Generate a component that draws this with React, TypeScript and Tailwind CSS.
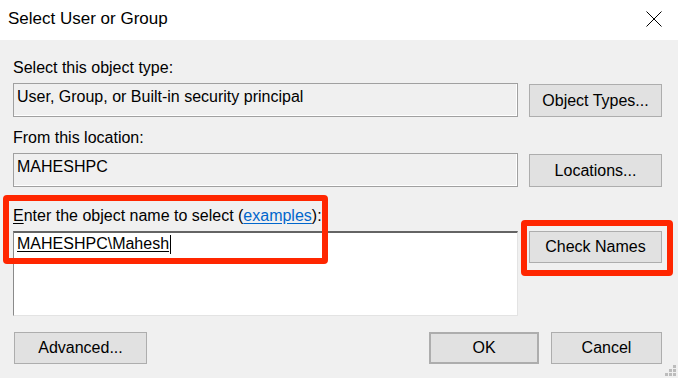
const font = { fontFamily: '"Liberation Sans", Arial, sans-serif' };

const Btn = ({ label, className = "" }: { label: string; className?: string }) => (
  <div
    className={`flex items-center justify-center bg-[#e1e1e1] border border-[#adadad] text-[16px] leading-[18px] text-black ${className}`}
  >
    {label}
  </div>
);

const ReadOnlyBox = ({ text, className = "" }: { text: string; className?: string }) => (
  <div
    className={`w-[505px] h-[34px] bg-[#f0f0f0] border border-[#a0a0a0] shadow-[inset_-1px_-1px_0_#ffffff] pl-[3px] pt-[4px] text-[16px] leading-[18px] text-black ${className}`}
  >
    {text}
  </div>
);

export default function App() {
  return (
    <div style={font} className="relative w-[678px] h-[378px] bg-[#f0f0f0] overflow-hidden select-none">
      {/* title bar */}
      <div className="h-[40px] bg-white flex items-center justify-between pl-[8px] pr-[16px]">
        <span className="text-[17px] leading-[20px] text-black mt-[-2px]">Select User or Group</span>
        <svg width="16" height="16" viewBox="0 0 16 16" className="mt-[-3px]">
          <path d="M0.5 0.5 L15.5 15.5 M15.5 0.5 L0.5 15.5" stroke="#000" strokeWidth="1" fill="none" />
        </svg>
      </div>

      <div className="pl-[13px] pr-[16px] flex flex-col">
        <div className="mt-[19px] text-[16px] leading-[18px] text-black">Select this object type:</div>
        <div className="mt-[6px] flex gap-[11px]">
          <ReadOnlyBox text="User, Group, or Built-in security principal" className="text-[15.5px]" />
          <Btn label="Object Types..." className="w-[133px] h-[33px] mt-[1px]" />
        </div>

        <div className="mt-[12px] text-[16px] leading-[18px] text-black">From this location:</div>
        <div className="mt-[6px] flex gap-[11px]">
          <ReadOnlyBox text="MAHESHPC" />
          <Btn label="Locations..." className="w-[133px] h-[33px] mt-[1px]" />
        </div>

        <div className="mt-[20px] text-[16px] leading-[18px] text-black">
          <span className="underline underline-offset-2">E</span>nter the object name to select (
          <span className="text-[#0066cc] underline underline-offset-2">examples</span>):
        </div>
        <div className="mt-[6px] flex gap-[11px]">
          <div className="w-[505px] h-[85px] bg-white border-t-2 border-l border-t-[#646464] border-l-[#8a8a8a] border-r border-b border-r-[#e3e3e3] border-b-[#e3e3e3] pl-[3px] pt-[2px] text-[16px] leading-[18px] text-black flex items-start">
            <span className="underline underline-offset-2">MAHESHPC\Mahesh</span>
            <span className="ml-[1px] w-[1px] h-[19px] bg-black" />
          </div>
          <Btn label="Check Names" className="w-[133px] h-[32px]" />
        </div>

        <div className="mt-[16px] flex items-start">
          <Btn label="Advanced..." className="w-[133px] h-[32px] ml-[1px]" />
          <div className="flex-1" />
          <Btn label="OK" className="w-[110px] h-[32px] border-2 border-[#0078d7]" />
          <Btn label="Cancel" className="w-[111px] h-[32px] ml-[12px]" />
        </div>
      </div>

      {/* red annotation boxes */}
      <div className="absolute left-[3px] top-[195px] w-[325px] h-[69px] border-[6px] border-[#ff2600] rounded-[4px]" />
      <div className="absolute left-[521px] top-[220px] w-[152px] h-[56px] border-[6px] border-[#ff2600] rounded-[4px]" />

      {/* resize grip */}
      <div className="absolute left-[673px] top-[365px] w-[3px] h-[3px] bg-[#bcbcbc]" />
      <div className="absolute left-[669px] top-[369px] w-[3px] h-[3px] bg-[#bcbcbc]" />
      <div className="absolute left-[673px] top-[369px] w-[3px] h-[3px] bg-[#bcbcbc]" />
      <div className="absolute left-[665px] top-[373px] w-[3px] h-[3px] bg-[#bcbcbc]" />
      <div className="absolute left-[669px] top-[373px] w-[3px] h-[3px] bg-[#bcbcbc]" />
      <div className="absolute left-[673px] top-[373px] w-[3px] h-[3px] bg-[#bcbcbc]" />
    </div>
  );
}
